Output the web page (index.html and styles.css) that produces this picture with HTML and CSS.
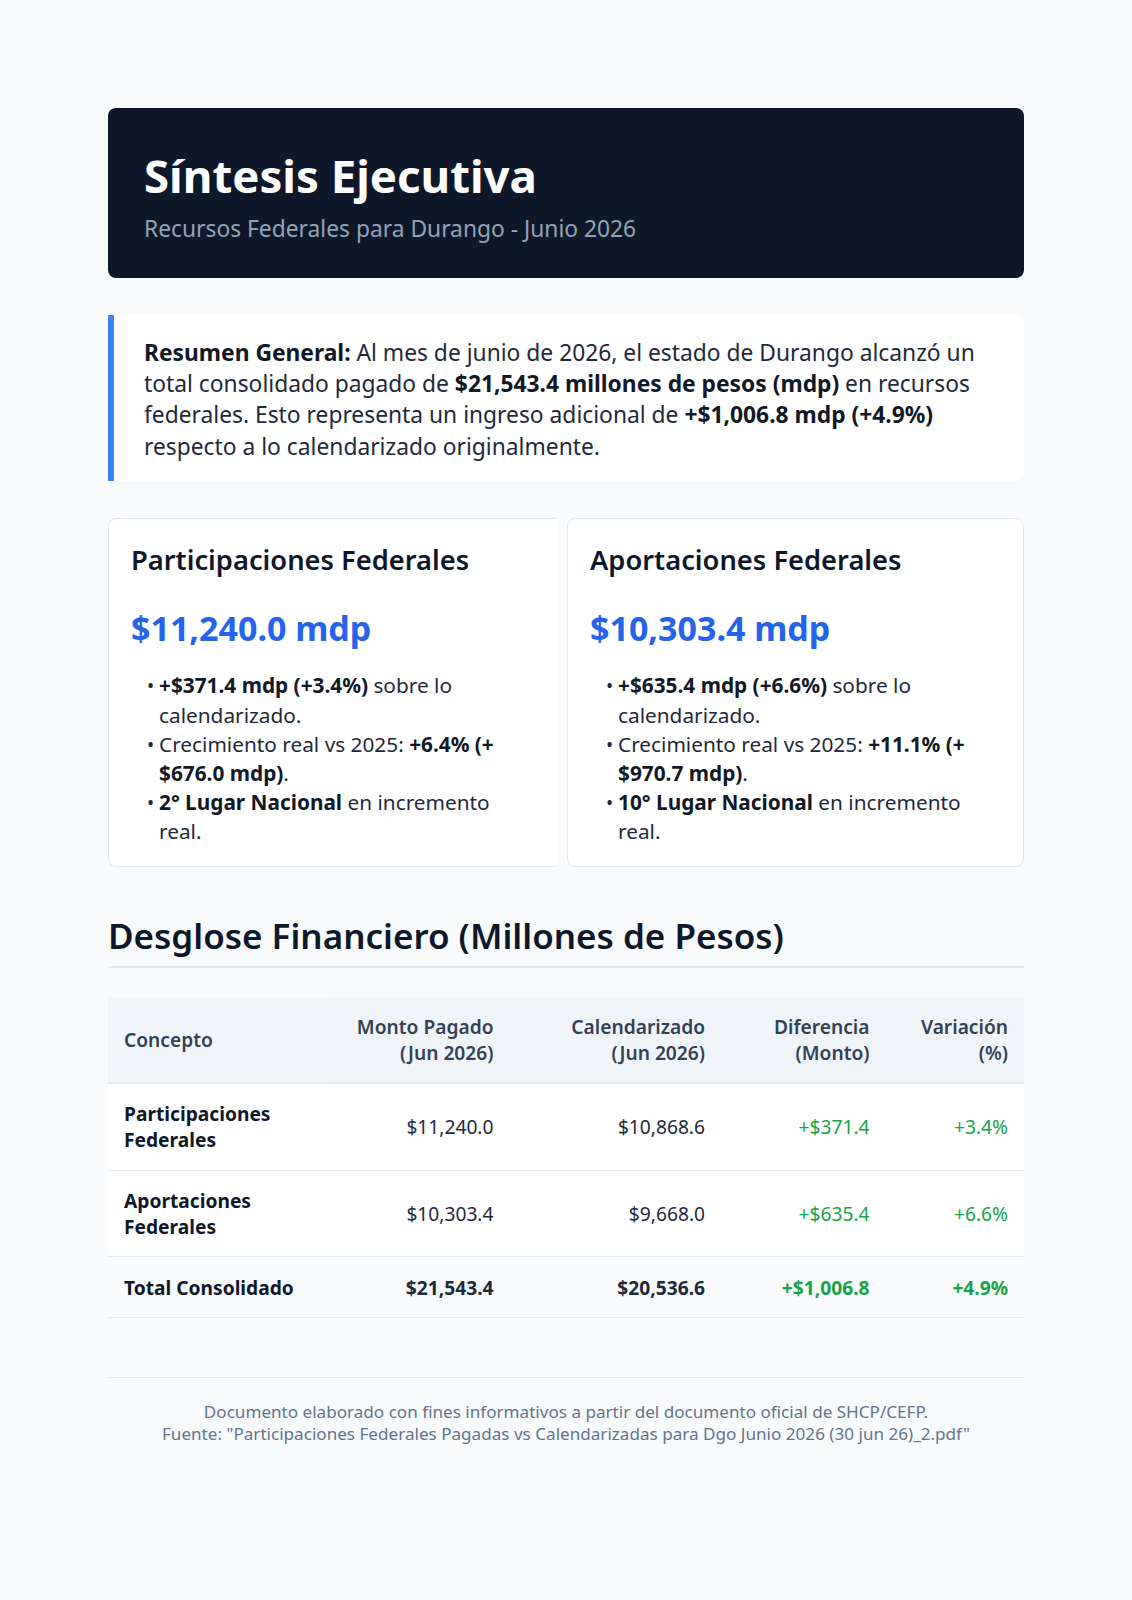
FILE: index.html
```html
<!DOCTYPE html>
<html lang="es">
<head>
<meta charset="utf-8">
<title>Síntesis Ejecutiva</title>
<link rel="stylesheet" href="styles.css">
</head>
<body>
<div class="page">
  <header class="hero">
    <h1 class="hero-title">Síntesis Ejecutiva</h1>
    <p class="hero-sub">Recursos Federales para Durango - Junio 2026</p>
  </header>

  <section class="summary">
    <p><strong>Resumen General:</strong> Al mes de junio de 2026, el estado de Durango alcanzó un total consolidado pagado de <strong>$21,543.4 millones de pesos (mdp)</strong> en recursos federales. Esto representa un ingreso adicional de <strong>+$1,006.8 mdp (+4.9%)</strong> respecto a lo calendarizado originalmente.</p>
  </section>

  <section class="cards">
    <article class="card card-left">
      <h2 class="card-title">Participaciones Federales</h2>
      <div class="card-amount">$11,240.0 mdp</div>
      <ul class="card-list">
        <li><strong>+$371.4 mdp (+3.4%)</strong> sobre lo calendarizado.</li>
        <li>Crecimiento real vs 2025: <strong>+6.4% (+<wbr>$676.0 mdp)</strong>.</li>
        <li><strong>2° Lugar Nacional</strong> en incremento real.</li>
      </ul>
    </article>
    <article class="card card-right">
      <h2 class="card-title">Aportaciones Federales</h2>
      <div class="card-amount">$10,303.4 mdp</div>
      <ul class="card-list">
        <li><strong>+$635.4 mdp (+6.6%)</strong> sobre lo calendarizado.</li>
        <li>Crecimiento real vs 2025: <strong>+11.1% (+<wbr>$970.7 mdp)</strong>.</li>
        <li><strong>10° Lugar Nacional</strong> en incremento real.</li>
      </ul>
    </article>
  </section>

  <h2 class="section-title">Desglose Financiero (Millones de Pesos)</h2>

  <table class="fin-table">
    <colgroup>
      <col class="c1"><col class="c2"><col class="c3"><col class="c4"><col class="c5">
    </colgroup>
    <thead>
      <tr>
        <th class="left first">Concepto</th>
        <th>Monto Pagado<br>(Jun 2026)</th>
        <th>Calendarizado<br>(Jun 2026)</th>
        <th>Diferencia<br>(Monto)</th>
        <th>Variación<br>(%)</th>
      </tr>
    </thead>
    <tbody>
      <tr>
        <td class="left concept">Participaciones<br>Federales</td>
        <td>$11,240.0</td>
        <td>$10,868.6</td>
        <td class="pos">+$371.4</td>
        <td class="pos">+3.4%</td>
      </tr>
      <tr>
        <td class="left concept">Aportaciones<br>Federales</td>
        <td>$10,303.4</td>
        <td>$9,668.0</td>
        <td class="pos">+$635.4</td>
        <td class="pos">+6.6%</td>
      </tr>
      <tr class="total">
        <td class="left concept">Total Consolidado</td>
        <td>$21,543.4</td>
        <td>$20,536.6</td>
        <td class="pos">+$1,006.8</td>
        <td class="pos">+4.9%</td>
      </tr>
    </tbody>
  </table>

  <footer class="foot">
    <p>Documento elaborado con fines informativos a partir del documento oficial de SHCP/CEFP.<br>Fuente: "Participaciones Federales Pagadas vs Calendarizadas para Dgo Junio 2026 (30 jun 26)_2.pdf"</p>
  </footer>
</div>
</body>
</html>
```

FILE: styles.css
```css
* { box-sizing: border-box; }

html, body {
  margin: 0;
  padding: 0;
  background: #f8fafc;
}

body {
  font-family: "Noto Sans", "Open Sans", "Liberation Sans", sans-serif;
  color: #1e293b;
}

.page {
  max-width: 916px;
  margin: 0 auto;
  padding: 108px 0 120px;
}

/* Header */
.hero {
  background: #0f172a;
  border-radius: 8px;
  height: 170px;
  padding: 38px 36px 0;
}

.hero-title {
  margin: 0;
  color: #ffffff;
  font-size: 45.6px;
  line-height: 1.3;
  font-weight: 700;
}

.hero-sub {
  margin: 8px 0 0;
  color: #94a3b8;
  font-size: 22.8px;
  line-height: 1.4;
}

/* Summary */
.summary {
  margin-top: 37px;
  background: #ffffff;
  border-left: 6px solid #3b82f6;
  border-radius: 0 8px 8px 0;
  padding: 21.5px 30px 19px;
}

.summary p {
  margin: 0;
  font-size: 22.8px;
  line-height: 31.4px;
  color: #1e293b;
}

.summary strong { color: #111827; font-weight: 700; }

/* Cards */
.cards {
  margin-top: 37px;
  display: grid;
  grid-template-columns: 449px 457px;
  column-gap: 10px;
}

.card {
  background: #ffffff;
  border: 1px solid #e2e8f0;
  border-radius: 8px;
  padding: 23px 22px 20px;
}

.card-left {
  border-right: 0;
  border-radius: 8px 0 0 8px;
}

.card-title {
  margin: 0 0 30px;
  font-size: 27.3px;
  line-height: 1.3;
  font-weight: 600;
  color: #0f172a;
}

.card-amount {
  font-size: 34px;
  line-height: 1.2;
  font-weight: 700;
  color: #2563eb;
}

.card-list {
  margin: 23px 0 0;
  padding-left: 28px;
  font-size: 20.8px;
  line-height: 1.4;
  color: #1e293b;
}

.card-list li { margin: 0; }
.card-list li::marker { content: "• "; font-size: 19px; color: #1e293b; }
.card-list strong { font-weight: 700; color: #111827; }

/* Section title */
.section-title {
  margin: 48px 0 0;
  padding-bottom: 9px;
  border-bottom: 2px solid #e2e8f0;
  font-size: 35px;
  line-height: 1.2;
  font-weight: 600;
  color: #0f172a;
}

/* Table */
.fin-table {
  margin-top: 29px;
  width: 100%;
  table-layout: fixed;
  border-collapse: collapse;
  font-size: 19.2px;
  line-height: 25.6px;
}

.c1 { width: 219px; }
.c2 { width: 182.5px; }
.c3 { width: 211.5px; }
.c4 { width: 164.5px; }
.c5 { width: 138.5px; }

.fin-table th {
  background: #f0f4f9;
  color: #334155;
  font-weight: 600;
  text-align: right;
  padding: 17px 16px;
  border-bottom: 2px solid #e2e8f0;
  vertical-align: middle;
}

.fin-table th.first { background: #f1f5f9; }

.fin-table td {
  background: #ffffff;
  padding: 17.2px 16px;
  text-align: right;
  border-bottom: 1px solid #e2e8f0;
  color: #1e293b;
  vertical-align: middle;
}

.fin-table .left { text-align: left; }

.fin-table td.concept { font-weight: 700; color: #0f172a; }

.fin-table td.pos { color: #16a34a; }

.fin-table tr.total td {
  background: #f8fafc;
  font-weight: 700;
}

/* Footer */
.foot {
  margin-top: 59px;
  border-top: 1px solid #e2e8f0;
  padding-top: 23px;
  text-align: center;
}

.foot p {
  margin: 0;
  font-size: 17.1px;
  line-height: 21.5px;
  color: #64748b;
}
```
